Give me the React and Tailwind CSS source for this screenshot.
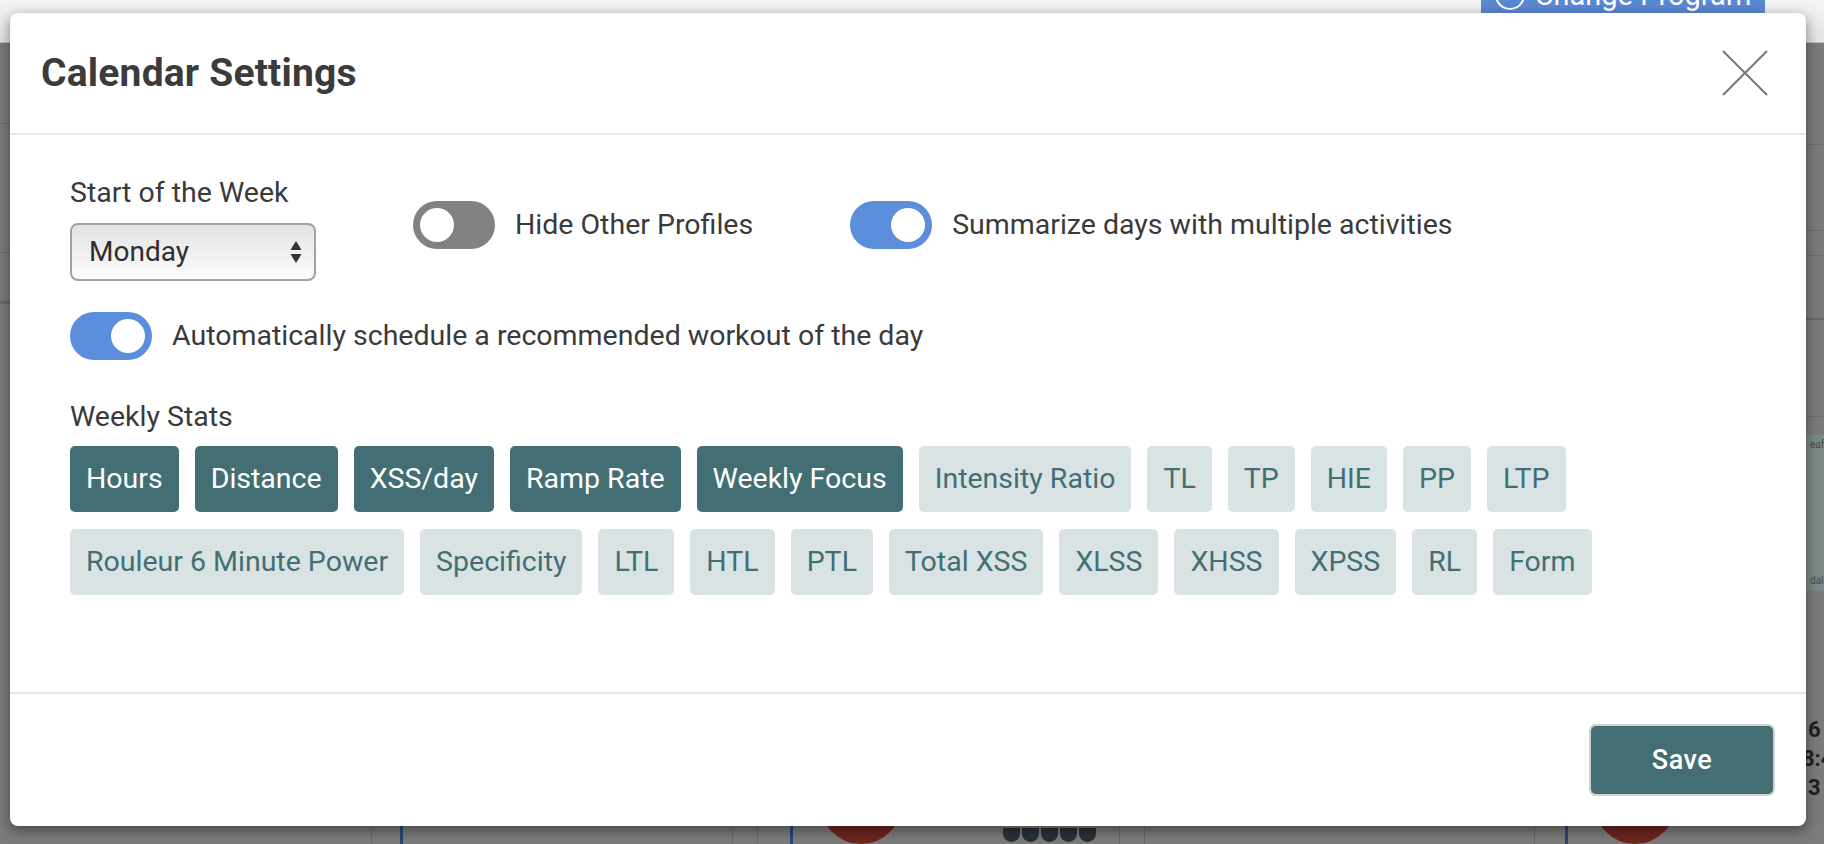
import React, { useState } from 'react';

const stats = [
  { label: 'Hours', on: true },
  { label: 'Distance', on: true },
  { label: 'XSS/day', on: true },
  { label: 'Ramp Rate', on: true },
  { label: 'Weekly Focus', on: true },
  { label: 'Intensity Ratio', on: false },
  { label: 'TL', on: false },
  { label: 'TP', on: false },
  { label: 'HIE', on: false },
  { label: 'PP', on: false },
  { label: 'LTP', on: false },
  { label: 'Rouleur 6 Minute Power', on: false },
  { label: 'Specificity', on: false },
  { label: 'LTL', on: false },
  { label: 'HTL', on: false },
  { label: 'PTL', on: false },
  { label: 'Total XSS', on: false },
  { label: 'XLSS', on: false },
  { label: 'XHSS', on: false },
  { label: 'XPSS', on: false },
  { label: 'RL', on: false },
  { label: 'Form', on: false },
];

const Toggle = ({ on, onClick }) => (
  <button
    type="button"
    onClick={onClick}
    className={`flex items-center w-[82px] h-[48px] rounded-full px-[7px] shrink-0 ${
      on ? 'bg-[#5b8fdc] justify-end' : 'bg-[#828282] justify-start'
    }`}
  >
    <span className="block w-[34px] h-[34px] rounded-full bg-white" />
  </button>
);

const Blob = () => (
  <div className="w-[82px] h-[18px] overflow-hidden">
    <div className="w-[82px] h-[82px] -mt-[64px] rounded-full bg-[#6e2620]" />
  </div>
);

// the calendar page behind the dimmed overlay; only slivers of it show
const Backdrop = () => (
  <div className="absolute inset-0 flex flex-col bg-[#7b7b7b]">
    <div className="h-[43px] shrink-0 flex justify-end items-start pr-[59px] bg-gradient-to-b from-[#f4f4f4] to-[#e4e4e4] border-b border-[#bdbdbd]">
      <div className="w-[284px] h-[14px] bg-[#5b88d2] overflow-hidden flex justify-center">
        <div className="-mt-[22px] flex items-center gap-[10px] text-white text-[29px] leading-[34px] h-[34px]">
          <span className="block w-[30px] h-[30px] rounded-full border-2 border-white" />
          <span>Change Program</span>
        </div>
      </div>
    </div>

    <div className="flex-1 flex justify-between">
      <div className="w-[10px] flex flex-col">
        <div className="h-[81px] border-b border-[#6b6b6b]" />
        <div className="h-[129px] border-b border-[#6b6b6b]" />
        <div className="h-[51px] border-b-[3px] border-[#686868]" />
      </div>
      <div className="w-[20px] flex flex-col">
        <div className="h-[102px] border-b border-[#6e6e6e]" />
        <div className="h-[86px] border-b border-[#6e6e6e]" />
        <div className="h-[25px] border-b border-[#6e6e6e]" />
        <div className="h-[64px] border-b-2 border-[#686868]" />
        <div className="h-[97px] border-b border-[#6e6e6e]" />
        <div className="mt-[18px] h-[156px] bg-[#7a8a87] text-[10px] leading-[12px] text-[#4a4a4a] pl-[6px] flex flex-col justify-between py-[4px]">
          <span>eafo</span>
          <span>dale</span>
        </div>
        <div className="mt-[124px] -ml-[2px] flex flex-col text-[22px] leading-[29px] font-bold text-[#1f1f1f]">
          <span className="pl-[6px]">6</span>
          <span>8:4</span>
          <span className="pl-[6px]">3</span>
        </div>
      </div>
    </div>

    <div className="h-[18px] shrink-0 flex">
      <div className="w-[372px] border-r border-[#686868]" />
      <div className="w-[386px] flex border-r border-[#686868]">
        <div className="ml-[28px] w-[3px] bg-[#2a4676]" />
        <div className="flex-1" />
        <div className="w-[25px] border-l border-[#686868]" />
      </div>
      <div className="w-[387px] flex items-start border-r border-[#686868]">
        <div className="ml-[32px] w-[3px] h-full bg-[#2a4676]" />
        <div className="ml-[27px]">
          <Blob />
        </div>
        <div className="ml-[101px] mt-[2px] flex gap-[2px]">
          {[0, 1, 2, 3, 4].map((i) => (
            <span key={i} className="block w-[17px] h-[14px] bg-[#2b3038] rounded-b-full" />
          ))}
        </div>
        <div className="ml-auto w-[25px] h-full border-l border-[#686868]" />
      </div>
      <div className="w-[390px] border-r border-[#686868]" />
      <div className="flex-1 flex items-start">
        <div className="ml-[30px] w-[3px] h-full bg-[#2a4676]" />
        <div className="ml-[26px]">
          <Blob />
        </div>
      </div>
    </div>
  </div>
);

const App = () => {
  const [hideOthers, setHideOthers] = useState(false);
  const [summarize, setSummarize] = useState(true);
  const [autoSchedule, setAutoSchedule] = useState(true);
  const [selected, setSelected] = useState(stats);

  const flip = (label) =>
    setSelected(selected.map((s) => (s.label === label ? { ...s, on: !s.on } : s)));

  return (
    <div className="relative w-[1824px] h-[844px] overflow-hidden font-['Roboto','Liberation_Sans',sans-serif]">
      <Backdrop />

      <div className="absolute left-[10px] top-[13px] w-[1796px] h-[813px] bg-white rounded-[8px] shadow-[0_4px_14px_rgba(0,0,0,0.45)] flex flex-col">
        <div className="h-[122px] flex items-center justify-between pl-[31px] pr-[38px] border-b-2 border-[#e9e9e9]">
          <h1 className="text-[39px] leading-[46px] font-bold text-[#3b3b3b] tracking-[0.2px]">Calendar Settings</h1>
          <button type="button" className="w-[46px] h-[46px]">
            <svg viewBox="0 0 46 46" width="46" height="46">
              <path d="M1 1L45 45M45 1L1 45" stroke="#777777" strokeWidth="2" fill="none" />
            </svg>
          </button>
        </div>

        <div className="flex-1 px-[60px] pt-[43px] text-[28.5px] leading-[30px] text-[#3a3a3a]">
          <div className="flex items-start gap-[97px]">
            <div className="flex flex-col">
              <span>Start of the Week</span>
              <div className="mt-[15px] w-[246px] h-[58px] rounded-[8px] border-2 border-[#a2a2a2] bg-gradient-to-b from-[#e3e3e3] to-[#fcfcfc] flex items-center justify-between pl-[17px] pr-[12px] text-[28px] text-[#2e2e2e]">
                <span>Monday</span>
                <svg width="12" height="24" viewBox="0 0 12 24">
                  <path d="M6 1L11.5 10H0.5Z" fill="#333" />
                  <path d="M6 23L11.5 14H0.5Z" fill="#333" />
                </svg>
              </div>
            </div>
            <div className="mt-[23px] flex items-center gap-[20px]">
              <Toggle on={hideOthers} onClick={() => setHideOthers(!hideOthers)} />
              <span>Hide Other Profiles</span>
            </div>
            <div className="mt-[23px] flex items-center gap-[20px]">
              <Toggle on={summarize} onClick={() => setSummarize(!summarize)} />
              <span>Summarize days with multiple activities</span>
            </div>
          </div>

          <div className="mt-[31px] flex items-center gap-[20px]">
            <Toggle on={autoSchedule} onClick={() => setAutoSchedule(!autoSchedule)} />
            <span>Automatically schedule a recommended workout of the day</span>
          </div>

          <div className="mt-[42px]">Weekly Stats</div>
          <div className="mt-[14px] flex flex-wrap gap-x-[16px] gap-y-[17px]">
            {selected.map((s) => (
              <button
                key={s.label}
                type="button"
                onClick={() => flip(s.label)}
                className={`h-[66px] px-[16px] rounded-[5px] text-[28.5px] leading-[30px] ${
                  s.on ? 'bg-[#436f74] text-white' : 'bg-[#d9e3e4] text-[#436f74]'
                }`}
              >
                {s.label}
              </button>
            ))}
          </div>
        </div>

        <div className="border-t-2 border-[#e6e6e6] flex justify-end px-[31px] py-[30px]">
          <button
            type="button"
            className="w-[186px] h-[72px] rounded-[7px] border-2 border-[#cfcfcf] bg-[#436f74] text-white text-[27px] font-medium tracking-[0.5px]"
          >
            Save
          </button>
        </div>
      </div>
    </div>
  );
};

export default App;
